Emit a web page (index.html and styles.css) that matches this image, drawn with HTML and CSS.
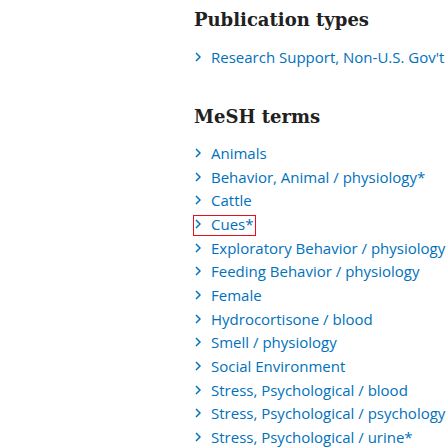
FILE: index.html
```html
<!DOCTYPE html>
<html>
<head>
<meta charset="utf-8">
<link rel="stylesheet" href="styles.css">
</head>
<body>
<div class="page">
  <section class="group">
    <h2 class="title">Publication types</h2>
    <ul class="terms">
      <li><a class="term"><svg class="chev" viewBox="0 0 6 10"><path d="M1 1 L5 5 L1 9"/></svg>Research Support, Non-U.S. Gov't</a></li>
    </ul>
  </section>
  <section class="group mesh">
    <h2 class="title">MeSH terms</h2>
    <ul class="terms">
      <li><a class="term"><svg class="chev" viewBox="0 0 6 10"><path d="M1 1 L5 5 L1 9"/></svg>Animals</a></li>
      <li><a class="term"><svg class="chev" viewBox="0 0 6 10"><path d="M1 1 L5 5 L1 9"/></svg>Behavior, Animal / physiology*</a></li>
      <li><a class="term"><svg class="chev" viewBox="0 0 6 10"><path d="M1 1 L5 5 L1 9"/></svg>Cattle</a></li>
      <li><a class="term focused"><svg class="chev" viewBox="0 0 6 10"><path d="M1 1 L5 5 L1 9"/></svg>Cues*</a></li>
      <li><a class="term"><svg class="chev" viewBox="0 0 6 10"><path d="M1 1 L5 5 L1 9"/></svg>Exploratory Behavior / physiology</a></li>
      <li><a class="term"><svg class="chev" viewBox="0 0 6 10"><path d="M1 1 L5 5 L1 9"/></svg>Feeding Behavior / physiology</a></li>
      <li><a class="term"><svg class="chev" viewBox="0 0 6 10"><path d="M1 1 L5 5 L1 9"/></svg>Female</a></li>
      <li><a class="term"><svg class="chev" viewBox="0 0 6 10"><path d="M1 1 L5 5 L1 9"/></svg>Hydrocortisone / blood</a></li>
      <li><a class="term"><svg class="chev" viewBox="0 0 6 10"><path d="M1 1 L5 5 L1 9"/></svg>Smell / physiology</a></li>
      <li><a class="term"><svg class="chev" viewBox="0 0 6 10"><path d="M1 1 L5 5 L1 9"/></svg>Social Environment</a></li>
      <li><a class="term"><svg class="chev" viewBox="0 0 6 10"><path d="M1 1 L5 5 L1 9"/></svg>Stress, Psychological / blood</a></li>
      <li><a class="term"><svg class="chev" viewBox="0 0 6 10"><path d="M1 1 L5 5 L1 9"/></svg>Stress, Psychological / psychology</a></li>
      <li><a class="term"><svg class="chev" viewBox="0 0 6 10"><path d="M1 1 L5 5 L1 9"/></svg>Stress, Psychological / urine*</a></li>
    </ul>
  </section>
</div>
</body>
</html>
```
FILE: styles.css
```css
html, body {
  margin: 0;
  padding: 0;
  background: #fff;
  overflow: hidden;
  font-family: "Open Sans", sans-serif;
  line-height: 1;
}
.page {
  width: 448px;
  height: 448px;
  padding: 0 0 0 194px;
  box-sizing: border-box;
  overflow: hidden;
}
.group {
  white-space: nowrap;
}
.title {
  font-family: "DejaVu Serif", serif;
  font-weight: 700;
  font-size: 18px;
  color: #212121;
  margin: 0;
  padding-top: 8px;
  line-height: 24px;
}
.mesh .title {
  padding-top: 34.5px;
}
.terms {
  list-style: none;
  margin: 15px 0 0;
  padding: 0;
}
.mesh .terms {
  margin-top: 13.5px;
}
.terms li {
  display: flex;
  align-items: center;
  height: 23.67px;
}
.term {
  display: flex;
  align-items: center;
  box-sizing: border-box;
  height: 19px;
  padding: 0 2px 3px 0;
  font-family: "Open Sans", sans-serif;
  font-size: 15px;
  line-height: 16px;
  color: #0071bc;
}
.chev {
  flex: none;
  width: 6px;
  height: 10px;
  margin: 0 10px 0 1px;
  fill: none;
  stroke: #0071bc;
  stroke-width: 1.5;
}
.focused {
  outline: 1px solid #e8101a;
}
```
